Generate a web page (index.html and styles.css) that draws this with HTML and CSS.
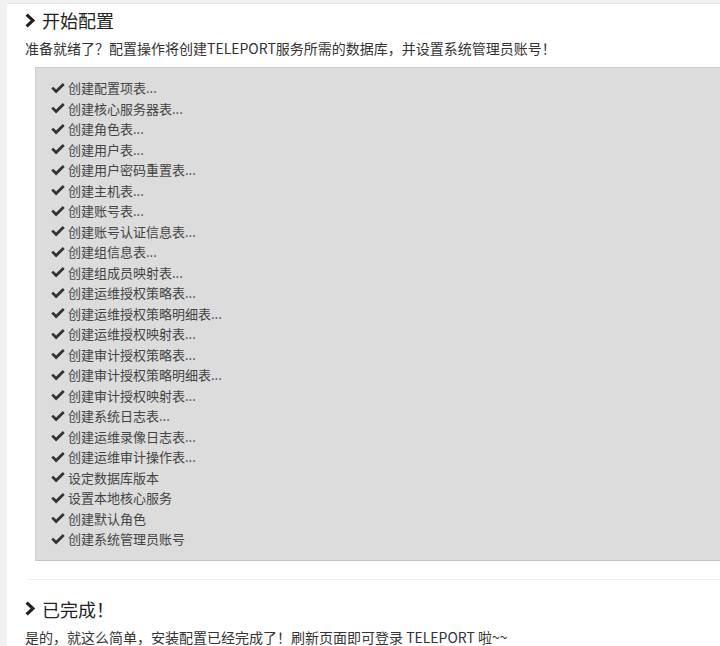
FILE: index.html
```html
<!DOCTYPE html>
<html lang="zh-CN">
<head>
<meta charset="utf-8">
<link rel="stylesheet" href="styles.css">
</head>
<body>
<div class="panel">
  <h2 class="step-title">
    <svg class="chev" viewBox="0 0 10 15"><polyline points="1.6,1.6 8,7.5 1.6,13.4" fill="none" stroke="#222" stroke-width="3.2" stroke-linejoin="miter"/></svg>
    <span>开始配置</span>
  </h2>
  <p class="desc">准备就绪了？配置操作将创建TELEPORT服务所需的数据库，并设置系统管理员账号！</p>
  <div class="log">
    <ul class="log-list">
      <li><svg class="ok" viewBox="0 0 14 11"><path d="M0.3 5.6 L2.2 3.7 L5.1 6.6 L11.8 0 L13.7 1.9 L5.1 10.5 Z" fill="#333"/></svg>创建配置项表...</li>
      <li><svg class="ok" viewBox="0 0 14 11"><path d="M0.3 5.6 L2.2 3.7 L5.1 6.6 L11.8 0 L13.7 1.9 L5.1 10.5 Z" fill="#333"/></svg>创建核心服务器表...</li>
      <li><svg class="ok" viewBox="0 0 14 11"><path d="M0.3 5.6 L2.2 3.7 L5.1 6.6 L11.8 0 L13.7 1.9 L5.1 10.5 Z" fill="#333"/></svg>创建角色表...</li>
      <li><svg class="ok" viewBox="0 0 14 11"><path d="M0.3 5.6 L2.2 3.7 L5.1 6.6 L11.8 0 L13.7 1.9 L5.1 10.5 Z" fill="#333"/></svg>创建用户表...</li>
      <li><svg class="ok" viewBox="0 0 14 11"><path d="M0.3 5.6 L2.2 3.7 L5.1 6.6 L11.8 0 L13.7 1.9 L5.1 10.5 Z" fill="#333"/></svg>创建用户密码重置表...</li>
      <li><svg class="ok" viewBox="0 0 14 11"><path d="M0.3 5.6 L2.2 3.7 L5.1 6.6 L11.8 0 L13.7 1.9 L5.1 10.5 Z" fill="#333"/></svg>创建主机表...</li>
      <li><svg class="ok" viewBox="0 0 14 11"><path d="M0.3 5.6 L2.2 3.7 L5.1 6.6 L11.8 0 L13.7 1.9 L5.1 10.5 Z" fill="#333"/></svg>创建账号表...</li>
      <li><svg class="ok" viewBox="0 0 14 11"><path d="M0.3 5.6 L2.2 3.7 L5.1 6.6 L11.8 0 L13.7 1.9 L5.1 10.5 Z" fill="#333"/></svg>创建账号认证信息表...</li>
      <li><svg class="ok" viewBox="0 0 14 11"><path d="M0.3 5.6 L2.2 3.7 L5.1 6.6 L11.8 0 L13.7 1.9 L5.1 10.5 Z" fill="#333"/></svg>创建组信息表...</li>
      <li><svg class="ok" viewBox="0 0 14 11"><path d="M0.3 5.6 L2.2 3.7 L5.1 6.6 L11.8 0 L13.7 1.9 L5.1 10.5 Z" fill="#333"/></svg>创建组成员映射表...</li>
      <li><svg class="ok" viewBox="0 0 14 11"><path d="M0.3 5.6 L2.2 3.7 L5.1 6.6 L11.8 0 L13.7 1.9 L5.1 10.5 Z" fill="#333"/></svg>创建运维授权策略表...</li>
      <li><svg class="ok" viewBox="0 0 14 11"><path d="M0.3 5.6 L2.2 3.7 L5.1 6.6 L11.8 0 L13.7 1.9 L5.1 10.5 Z" fill="#333"/></svg>创建运维授权策略明细表...</li>
      <li><svg class="ok" viewBox="0 0 14 11"><path d="M0.3 5.6 L2.2 3.7 L5.1 6.6 L11.8 0 L13.7 1.9 L5.1 10.5 Z" fill="#333"/></svg>创建运维授权映射表...</li>
      <li><svg class="ok" viewBox="0 0 14 11"><path d="M0.3 5.6 L2.2 3.7 L5.1 6.6 L11.8 0 L13.7 1.9 L5.1 10.5 Z" fill="#333"/></svg>创建审计授权策略表...</li>
      <li><svg class="ok" viewBox="0 0 14 11"><path d="M0.3 5.6 L2.2 3.7 L5.1 6.6 L11.8 0 L13.7 1.9 L5.1 10.5 Z" fill="#333"/></svg>创建审计授权策略明细表...</li>
      <li><svg class="ok" viewBox="0 0 14 11"><path d="M0.3 5.6 L2.2 3.7 L5.1 6.6 L11.8 0 L13.7 1.9 L5.1 10.5 Z" fill="#333"/></svg>创建审计授权映射表...</li>
      <li><svg class="ok" viewBox="0 0 14 11"><path d="M0.3 5.6 L2.2 3.7 L5.1 6.6 L11.8 0 L13.7 1.9 L5.1 10.5 Z" fill="#333"/></svg>创建系统日志表...</li>
      <li><svg class="ok" viewBox="0 0 14 11"><path d="M0.3 5.6 L2.2 3.7 L5.1 6.6 L11.8 0 L13.7 1.9 L5.1 10.5 Z" fill="#333"/></svg>创建运维录像日志表...</li>
      <li><svg class="ok" viewBox="0 0 14 11"><path d="M0.3 5.6 L2.2 3.7 L5.1 6.6 L11.8 0 L13.7 1.9 L5.1 10.5 Z" fill="#333"/></svg>创建运维审计操作表...</li>
      <li><svg class="ok" viewBox="0 0 14 11"><path d="M0.3 5.6 L2.2 3.7 L5.1 6.6 L11.8 0 L13.7 1.9 L5.1 10.5 Z" fill="#333"/></svg>设定数据库版本</li>
      <li><svg class="ok" viewBox="0 0 14 11"><path d="M0.3 5.6 L2.2 3.7 L5.1 6.6 L11.8 0 L13.7 1.9 L5.1 10.5 Z" fill="#333"/></svg>设置本地核心服务</li>
      <li><svg class="ok" viewBox="0 0 14 11"><path d="M0.3 5.6 L2.2 3.7 L5.1 6.6 L11.8 0 L13.7 1.9 L5.1 10.5 Z" fill="#333"/></svg>创建默认角色</li>
      <li><svg class="ok" viewBox="0 0 14 11"><path d="M0.3 5.6 L2.2 3.7 L5.1 6.6 L11.8 0 L13.7 1.9 L5.1 10.5 Z" fill="#333"/></svg>创建系统管理员账号</li>
    </ul>
  </div>
  <hr class="sep">
  <h2 class="step-title">
    <svg class="chev" viewBox="0 0 10 15"><polyline points="1.6,1.6 8,7.5 1.6,13.4" fill="none" stroke="#222" stroke-width="3.2" stroke-linejoin="miter"/></svg>
    <span>已完成！</span>
  </h2>
  <p class="desc">是的，就这么简单，安装配置已经完成了！刷新页面即可登录 TELEPORT 啦~~</p>
</div>
</body>
</html>
```

FILE: styles.css
```css
html, body {
  margin: 0;
  padding: 0;
  overflow: hidden;
}
body {
  background: #f1f1f1;
  font-family: "Noto Sans CJK SC", "Noto Sans", sans-serif;
  color: #333;
  height: 646px;
}
.panel {
  margin: 3px 0 0 7px;
  height: 643px;
  background: #fff;
  border-top: 1px solid #e6e6e6;
  padding: 3px 0 0 18px;
  box-sizing: border-box;
}
.step-title {
  margin: 0;
  display: flex;
  align-items: center;
  height: 26px;
  font-size: 18px;
  font-weight: normal;
  color: #222;
  line-height: 26px;
}
.chev {
  width: 10px;
  height: 15px;
  margin-right: 7px;
  flex: none;
}
.desc {
  margin: 5px 0 0 0;
  font-size: 14px;
  line-height: 20px;
  color: #333;
}
.log {
  margin: 9px 0 0 10px;
  background: #dcdcdc;
  border: 1px solid #cdcdcd;
  border-right: 0;
  border-bottom-color: #c4c4c4;
  padding: 10px 15px;
}
.log-list {
  list-style: none;
  margin: 0;
  padding: 0;
}
.log-list li {
  display: flex;
  align-items: center;
  font-size: 13px;
  line-height: 20.5px;
  height: 20.5px;
  color: #444;
}
.ok {
  width: 14px;
  height: 11px;
  margin-right: 3px;
  flex: none;
}
.sep {
  margin: 18px 0 0 3px;
  border: 0;
  border-top: 1px solid #eeeeee;
  height: 0;
}
.sep + .step-title {
  margin-top: 16px;
}
```
